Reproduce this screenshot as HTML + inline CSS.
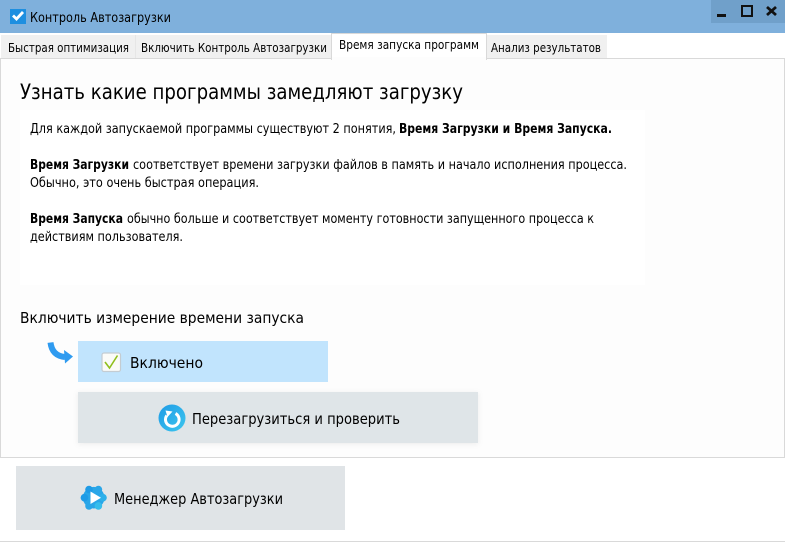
<!DOCTYPE html>
<html lang="ru"><head><meta charset="utf-8"><title>Контроль Автозагрузки</title>
<style>
html,body{margin:0;padding:0;background:#fff}
svg{display:block}
text{font-family:"DejaVu Sans","Liberation Sans",sans-serif;fill:#000}
.b{font-weight:bold}
</style></head><body>
<svg width="785" height="542" viewBox="0 0 785 542" xmlns="http://www.w3.org/2000/svg">
<defs>
<linearGradient id="g" x1="0" y1="0" x2="1" y2="1"><stop offset="0" stop-color="#1f9be6"/><stop offset="1" stop-color="#3cc6ee"/></linearGradient>
<filter id="s" x="-5%" y="-20%" width="110%" height="140%"><feDropShadow dx="0" dy="1" stdDeviation="3" flood-color="#000" flood-opacity=".07"/></filter>
</defs>
<rect width="785" height="542" fill="#fff"/>
<!-- title bar -->
<rect width="785" height="33" fill="#7fb0dc"/>
<rect x="711" y="0" width="74" height="23" fill="#70a0ca"/>
<rect x="717" y="14" width="9" height="3" fill="#111"/>
<rect x="742" y="6" width="10" height="10" fill="none" stroke="#111" stroke-width="2"/>
<path d="M767 7L776 15M776 7L767 15" stroke="#111" stroke-width="2.800" fill="none"/>
<rect x="10" y="9" width="16" height="15" fill="#1e8fe0"/>
<path d="M13 15.500L16.500 19L23 12" stroke="#fff" stroke-width="2.800" fill="none"/>
<text x="30" y="22" font-size="13" textLength="141" lengthAdjust="spacingAndGlyphs">Контроль Автозагрузки</text>
<!-- tabs -->
<rect x="1" y="35" width="134" height="23" fill="#f0f0f0"/>
<rect x="135" y="35" width="197" height="23" fill="#f0f0f0"/>
<rect x="135" y="35" width="1" height="23" fill="#e6e6e6"/>
<rect x="487" y="35" width="120" height="23" fill="#f0f0f0"/>
<rect x="0" y="58" width="785" height="1" fill="#d9d9d9"/>
<rect x="0" y="58" width="1" height="400" fill="#d9d9d9"/>
<rect x="784" y="58" width="1" height="400" fill="#d9d9d9"/>
<rect x="1" y="59" width="783" height="398" fill="#fdfdfd"/>
<rect x="331.500" y="33.500" width="155" height="26" fill="#fff" stroke="#d9d9d9"/>
<rect x="332" y="57" width="154" height="3" fill="#fdfdfd"/>
<rect x="0" y="457" width="785" height="1" fill="#d9d9d9"/>
<rect x="0" y="541" width="785" height="1" fill="#d9d9d9"/>
<text x="8" y="52" font-size="12" fill="#222" textLength="121" lengthAdjust="spacingAndGlyphs">Быстрая оптимизация</text>
<text x="141" y="52" font-size="12" textLength="186" lengthAdjust="spacingAndGlyphs">Включить Контроль Автозагрузки</text>
<text x="339" y="49" font-size="12" textLength="140" lengthAdjust="spacingAndGlyphs">Время запуска программ</text>
<text x="491" y="52" font-size="12" textLength="110" lengthAdjust="spacingAndGlyphs">Анализ результатов</text>
<!-- heading -->
<text x="20" y="99" font-size="21" textLength="443" lengthAdjust="spacingAndGlyphs">Узнать какие программы замедляют загрузку</text>
<!-- panel -->
<rect x="20" y="110" width="625" height="175" fill="#ffffff"/>
<text x="30" y="133" font-size="13" textLength="366" lengthAdjust="spacingAndGlyphs">Для каждой запускаемой программы существуют 2 понятия,</text>
<text x="399" y="133" font-size="13" class="b" textLength="213" lengthAdjust="spacingAndGlyphs">Время Загрузки и Время Запуска.</text>
<text x="30" y="169" font-size="13" class="b" textLength="99" lengthAdjust="spacingAndGlyphs">Время Загрузки</text>
<text x="133" y="169" font-size="13" textLength="494" lengthAdjust="spacingAndGlyphs">соответствует времени загрузки файлов в память и начало исполнения процесса.</text>
<text x="30" y="187" font-size="13" textLength="229" lengthAdjust="spacingAndGlyphs">Обычно, это очень быстрая операция.</text>
<text x="30" y="223" font-size="13" class="b" textLength="93" lengthAdjust="spacingAndGlyphs">Время Запуска</text>
<text x="127" y="223" font-size="13" textLength="467" lengthAdjust="spacingAndGlyphs">обычно больше и соответствует моменту готовности запущенного процесса к</text>
<text x="30" y="241" font-size="13" textLength="153" lengthAdjust="spacingAndGlyphs">действиям пользователя.</text>
<text x="20" y="323" font-size="15.500" textLength="284" lengthAdjust="spacingAndGlyphs">Включить измерение времени запуска</text>
<!-- arrow -->
<path d="M50.500 342.500C51.500 351 56 356 65 357" stroke="#2f9bf0" stroke-width="6" fill="none"/>
<path d="M64 350L73 356.500L65 363.500Z" fill="#2f9bf0"/>
<!-- checkbox row -->
<rect x="78" y="341" width="250" height="41" fill="#c1e4fd"/>
<rect x="102" y="353" width="18.500" height="18.500" rx="2" fill="#fbfbf8" stroke="#c4ccd2" stroke-width="1.200"/>
<path d="M105 362L109.500 368L117.500 355.500" stroke="#8fbf1c" stroke-width="1.600" fill="none"/>
<text x="130" y="368" font-size="15.500" textLength="73" lengthAdjust="spacingAndGlyphs">Включено</text>
<!-- restart -->
<rect x="78" y="392" width="400" height="51" fill="#dfe5e8" filter="url(#s)"/>
<circle cx="172" cy="418" r="13.500" fill="url(#g)"/>
<path d="M175.500 413.500A6.800 6.800 0 1 1 166.800 415.500" stroke="#fff" stroke-width="3" fill="none"/>
<path d="M165.500 410.500L172.500 411.500L167.500 417Z" fill="#fff"/>
<text x="192" y="424" font-size="15.500" textLength="208" lengthAdjust="spacingAndGlyphs">Перезагрузиться и проверить</text>
<!-- manager -->
<rect x="16" y="466" width="329" height="64" fill="#e0e4e7"/>
<circle cx="93.700" cy="497.700" r="10.800" fill="#2aa6e8"/>
<circle cx="103" cy="497.700" r="3.800" fill="#2eb0ea"/>
<circle cx="84.400" cy="497.700" r="3.800" fill="#1f9be6"/>
<circle cx="89" cy="489.500" r="3.800" fill="#1f9be6"/>
<circle cx="98.400" cy="489.500" r="3.800" fill="#2aa6e8"/>
<circle cx="89" cy="505.900" r="3.800" fill="#2aa6e8"/>
<circle cx="98.400" cy="505.900" r="3.800" fill="#36bdec"/>
<path d="M90.500 491.500L90.500 504L101 497.700Z" fill="#fff"/>
<text x="114" y="504" font-size="15.500" textLength="169" lengthAdjust="spacingAndGlyphs">Менеджер Автозагрузки</text>
</svg>
</body></html>
